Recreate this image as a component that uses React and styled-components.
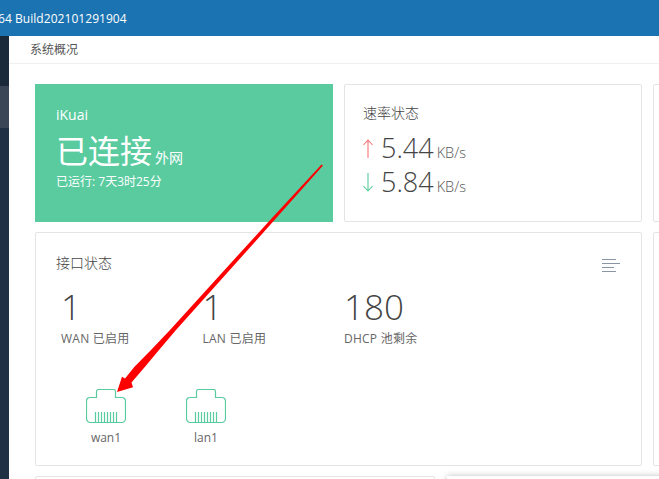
import React from 'react'
import styled, { createGlobalStyle } from 'styled-components'

const GlobalStyle = createGlobalStyle`
  html, body {
    margin: 0;
    padding: 0;
    background: #fff;
    overflow: hidden;
  }
  body {
    font-family: "Open Sans", "Noto Sans CJK SC", sans-serif;
  }
`

const Page = styled.div`
  position: relative;
  width: 659px;
  height: 479px;
  overflow: hidden;
`

const Header = styled.div`
  height: 36px;
  background: #1c73b1;
  color: #fff;
  font-size: 12px;
  font-weight: 500;
  line-height: 37px;
  white-space: nowrap;
  overflow: hidden;
  letter-spacing: 0.05px;
`

const HeaderText = styled.span`
  margin-left: -2px;
  display: inline-block;
`

const Body = styled.div`
  display: flex;
  height: 443px;
`

const Sidebar = styled.div`
  width: 9px;
  flex: none;
  background: #1f3044;
  display: flex;
  flex-direction: column;
`

const SideTop = styled.div`
  height: 50px;
  background: #1a2a3a;
`

const SideActive = styled.div`
  height: 42px;
  background: #3a4656;
`

const Main = styled.div`
  flex: 1;
  min-width: 0;
`

const Crumb = styled.div`
  height: 27px;
  padding-left: 21px;
  border-bottom: 1px solid #f0f0f0;
  color: #555;
  font-size: 12px;
  line-height: 27px;
`

const Content = styled.div`
  width: 690px;
  padding: 20px 0 0 26px;
  display: grid;
  grid-template-columns: 298px 298px 100px;
  column-gap: 11px;
  row-gap: 10px;
  grid-template-rows: 138px 234px 40px;
`

const Card = styled.div`
  box-sizing: border-box;
  background: #fff;
  border: 1px solid #e4e4e4;
  border-radius: 2px;
  color: #555;
  grid-column: ${p => p.$span || 'auto'};
  width: ${p => p.$width || 'auto'};
`

const GreenCard = styled.div`
  background: #59cb9f;
  color: #fff;
  padding: 20px 21px;
`

const Brand = styled.div`
  font-size: 14px;
  line-height: 22px;
`

const Status = styled.div`
  font-size: 32px;
  font-weight: 400;
  line-height: 44px;
  margin-top: 3px;
  white-space: nowrap;
`

const StatusTag = styled.small`
  font-size: 14px;
  margin-left: 3px;
`

const Uptime = styled.div`
  font-size: 12px;
  line-height: 16px;
  margin-top: -6px;
`

const SpeedCard = styled(Card)`
  padding: 18px;
`

const CardTitle = styled.div`
  font-size: 14px;
  font-weight: 300;
  line-height: 20px;
  color: #444;
`

const SpeedRow = styled.div`
  display: flex;
  align-items: baseline;
  height: 34px;
  line-height: 34px;
  margin-top: ${p => p.$first ? '8px' : '0'};
`

const ArrowSlot = styled.svg`
  align-self: center;
  margin-right: 8px;
  flex: none;
`

const SpeedValue = styled.span`
  font-size: 27px;
  font-weight: 300;
  color: #444;
`

const SpeedUnit = styled.span`
  font-size: 14.500px;
  font-weight: 300;
  margin-left: 3px;
  color: #555;
`

const PortCard = styled(Card)`
  position: relative;
  padding: 20px;
`

const MenuIcon = styled.svg`
  position: absolute;
  top: 26px;
  right: 21px;
`

const Stats = styled.div`
  display: flex;
  margin-top: 12px;
`

const Stat = styled.div`
  width: 141.5px;
  padding-left: 5px;
  box-sizing: border-box;
`

const StatValue = styled.div`
  font-size: 35px;
  font-weight: 300;
  line-height: 44px;
  color: #444;
`

const StatLabel = styled.div`
  font-size: 12px;
  letter-spacing: 0.25px;
  line-height: 18px;
  color: #666;
  margin-top: 1px;
`

const Ports = styled.div`
  display: flex;
  gap: 60px;
  margin-top: 41px;
  padding-left: 30px;
`

const Port = styled.div`
  width: 40px;
  text-align: center;
  color: #666;
  font-size: 12px;
  line-height: 16px;
`

const PortGlyph = styled.svg`
  display: block;
  margin-bottom: 7px;
`

const Overlay = styled.svg`
  position: absolute;
  left: 0;
  top: 0;
  pointer-events: none;
`

const Popup = styled.div`
  position: absolute;
  left: 447px;
  top: 476px;
  width: 230px;
  height: 30px;
  background: #fff;
  box-shadow: 0 0 6px rgba(0, 0, 0, 0.25);
`

const UpArrow = () => (
  <ArrowSlot width="10" height="19" viewBox="0 0 10 19" fill="none" stroke="#fb7478" strokeWidth="1.1">
    <path d="M5 19V1M.5 6L5 1l4.500 5" />
  </ArrowSlot>
)

const DownArrow = () => (
  <ArrowSlot width="10" height="19" viewBox="0 0 10 19" fill="none" stroke="#59cb9f" strokeWidth="1.1">
    <path d="M5 0v18M.5 13L5 18l4.500-5" />
  </ArrowSlot>
)

const PortIcon = () => (
  <PortGlyph width="40" height="34" viewBox="0 0 40 34" fill="none" stroke="#59cb9f" strokeWidth="1.2">
    <path d="M10.500 8.500V2.500a2 2 0 0 1 2-2h15a2 2 0 0 1 2 2v6h6.500a3.500 3.500 0 0 1 3.500 3.500v17.500a4 4 0 0 1-4 4h-31a4 4 0 0 1-4-4V12A3.500 3.500 0 0 1 4 8.500z" />
    <path d="M9.500 23v10M12.500 23v10M15.500 23v10M18.500 23v10M21.500 23v10M24.500 23v10M27.500 23v10M30.500 23v10" />
  </PortGlyph>
)

const App = () => (
  <Page>
    <GlobalStyle />
    <Header><HeaderText>64 Build202101291904</HeaderText></Header>
    <Body>
      <Sidebar>
        <SideTop />
        <SideActive />
      </Sidebar>
      <Main>
        <Crumb>系统概况</Crumb>
        <Content>
          <GreenCard>
            <Brand>iKuai</Brand>
            <Status>已连接<StatusTag>外网</StatusTag></Status>
            <Uptime>已运行: 7天3时25分</Uptime>
          </GreenCard>
          <SpeedCard>
            <CardTitle>速率状态</CardTitle>
            <SpeedRow $first>
              <UpArrow />
              <SpeedValue>5.44</SpeedValue>
              <SpeedUnit>KB/s</SpeedUnit>
            </SpeedRow>
            <SpeedRow>
              <DownArrow />
              <SpeedValue>5.84</SpeedValue>
              <SpeedUnit>KB/s</SpeedUnit>
            </SpeedRow>
          </SpeedCard>
          <Card />
          <PortCard $span="span 2">
            <CardTitle>接口状态</CardTitle>
            <MenuIcon width="18" height="14" viewBox="0 0 18 14" stroke="#8a96a3" strokeWidth="1" fill="none">
              <path d="M0 .5h14M0 4.500h18M0 8.500h12M0 12.500h14" />
            </MenuIcon>
            <Stats>
              <Stat><StatValue>1</StatValue><StatLabel>WAN 已启用</StatLabel></Stat>
              <Stat><StatValue>1</StatValue><StatLabel>LAN 已启用</StatLabel></Stat>
              <Stat><StatValue>180</StatValue><StatLabel>DHCP 池剩余</StatLabel></Stat>
            </Stats>
            <Ports>
              <Port><PortIcon />wan1</Port>
              <Port><PortIcon />lan1</Port>
            </Ports>
          </PortCard>
          <Card />
          <Card $span="span 2" $width="400px" />
          <Card />
        </Content>
      </Main>
    </Body>
    <Popup />
    <Overlay width="659" height="479" viewBox="0 0 659 479">
      <path d="M321.500 164.500L268.300 222L240 253L170 330L151 350L134.500 366.700L125 378.500L122 376.700L117 392L133 387.300L131.500 382.500L145 366.700L159 350L176 330L245 253L272.700 222L323 165.500z" fill="#f00" />
    </Overlay>
  </Page>
)

export default App
